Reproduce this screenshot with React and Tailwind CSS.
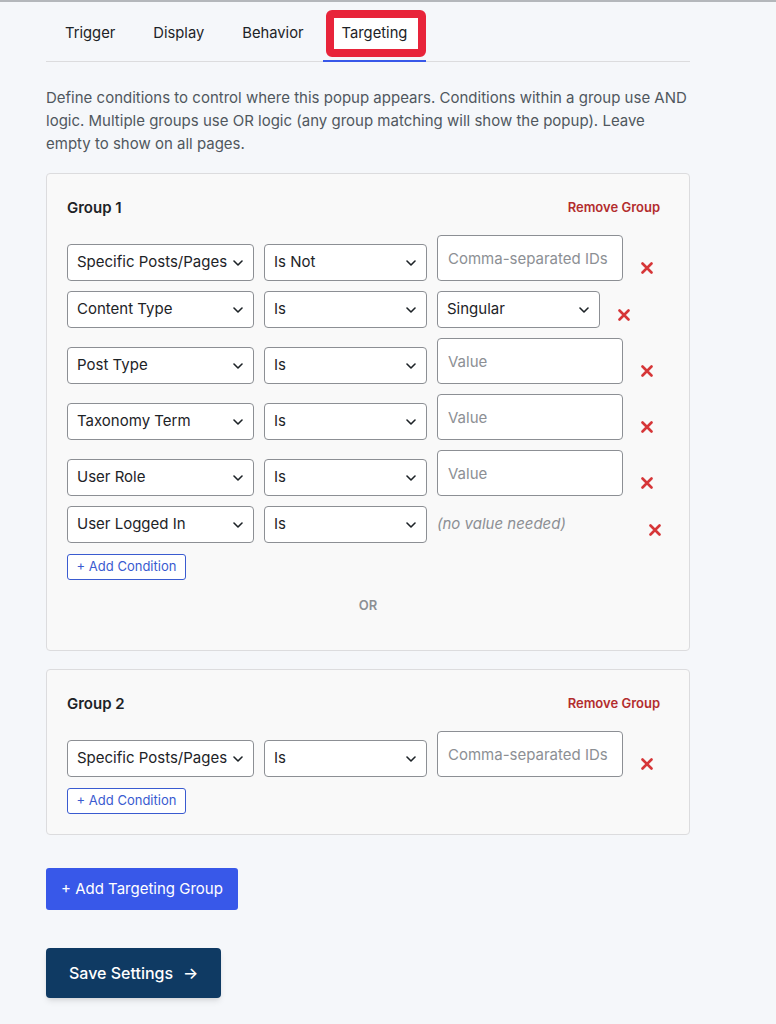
import React from 'react';

const font = "font-['Inter','Noto_Sans',sans-serif]";

const Chevron = () => (
    <svg width="10" height="6" viewBox="0 0 10 6" fill="none" className="shrink-0">
        <path d="M1 1l4 4 4-4" stroke="#1d2327" strokeWidth="1.6" strokeLinecap="round" strokeLinejoin="round" />
    </svg>
);

const RemoveX = () => (
    <button className="w-[24px] h-[26px] ml-[2px] flex items-center justify-center shrink-0">
        <svg width="12" height="12" viewBox="0 0 12 12">
            <path d="M1.5 1.5l9 9M10.5 1.5l-9 9" stroke="#d63638" strokeWidth="2.6" strokeLinecap="round" />
        </svg>
    </button>
);

const Select = ({ label, width }) => (
    <div className={`${width} h-[37px] bg-white border border-[#8c8f94] rounded-[4px] pl-[9px] pr-[10px] flex items-center justify-between text-[15px] text-[#1d2327] shrink-0`}>
        <span className="whitespace-nowrap">{label}</span>
        <Chevron />
    </div>
);

const ValueInput = ({ placeholder }) => (
    <input
        readOnly
        placeholder={placeholder}
        className="w-[186px] h-[46px] bg-white border border-[#8c8f94] rounded-[4px] px-[10px] text-[15px] text-[#1d2327] placeholder:text-[#8c8f94] shrink-0 outline-none"
    />
);

const ConditionRow = ({ field, op, value }) => {
    let third;
    if (value.type === 'input') {
        third = <ValueInput placeholder={value.text} />;
    } else if (value.type === 'select') {
        third = <Select label={value.text} width="w-[163px]" />;
    } else {
        third = (
            <span className="w-[194px] h-[37px] flex items-center text-[15px] italic text-[#8c8f94] shrink-0">
                {value.text}
            </span>
        );
    }
    return (
        <div className="flex items-end gap-[10px] mb-[10px]">
            <Select label={field} width="w-[187px]" />
            <Select label={op} width="w-[163px]" />
            {third}
            <RemoveX />
        </div>
    );
};

const AddCondition = () => (
    <button className="h-[26px] w-[119px] border border-[#3a5bd0] rounded-[3px] bg-white text-[13px] text-[#3a5bd0] mt-px">
        + Add Condition
    </button>
);

const Group = ({ title, rows, showOr }) => (
    <div className="border border-[#dcdcde] bg-[#f9f9f9] rounded-[4px] p-[20px]">
        <div className="flex items-center justify-between pt-[2px] mb-[15px]">
            <h3 className="text-[15px] leading-[24px] font-semibold text-[#1d2327]">{title}</h3>
            <button className="text-[13px] font-semibold text-[#b32d2e] mr-[9px]">Remove Group</button>
        </div>
        {rows.map((r, i) => (
            <ConditionRow key={i} {...r} />
        ))}
        <AddCondition />
        {showOr && (
            <div className="text-center text-[13px] leading-[20px] font-semibold text-[#8c8f94] mt-[15px] mb-[15px]">OR</div>
        )}
    </div>
);

const App = () => {
    const tabs = ['Trigger', 'Display', 'Behavior', 'Targeting'];

    const group1 = [
        { field: 'Specific Posts/Pages', op: 'Is Not', value: { type: 'input', text: 'Comma-separated IDs' } },
        { field: 'Content Type', op: 'Is', value: { type: 'select', text: 'Singular' } },
        { field: 'Post Type', op: 'Is', value: { type: 'input', text: 'Value' } },
        { field: 'Taxonomy Term', op: 'Is', value: { type: 'input', text: 'Value' } },
        { field: 'User Role', op: 'Is', value: { type: 'input', text: 'Value' } },
        { field: 'User Logged In', op: 'Is', value: { type: 'text', text: '(no value needed)' } },
    ];

    const group2 = [
        { field: 'Specific Posts/Pages', op: 'Is', value: { type: 'input', text: 'Comma-separated IDs' } },
    ];

    return (
        <div className={`min-h-screen bg-[#f5f7fa] border-t-2 border-[#b4b7bb] ${font}`}>
            <div className="ml-[46px] w-[644px] pb-[27px]">
                {/* tabs */}
                <div className="flex border-b border-[#dcdcde]">
                    {tabs.map((t) => (
                        <div key={t} className="relative px-[19px] pt-[21px] pb-[18px] text-[14.75px] leading-[20px] text-[#1d2327]">
                            {t}
                            {t === 'Targeting' && (
                                <>
                                    <span className="absolute left-[3px] right-0 top-[8px] h-[47px] border-[8px] border-[#e8243a] rounded-[6px] bg-white" />
                                    <span className="absolute left-0 right-0 -bottom-px h-[2px] bg-[#3858e9]" />
                                    <span className="absolute inset-0 px-[19px] pt-[21px]">{t}</span>
                                </>
                            )}
                        </div>
                    ))}
                </div>

                <p className="mt-[24px] mb-[18px] text-[15px] leading-[23px] text-[#50575e]">
                    Define conditions to control where this popup appears. Conditions within a group use AND logic. Multiple groups use OR logic (any group matching will show the popup). Leave empty to show on all pages.
                </p>

                <div className="flex flex-col gap-[18px]">
                    <Group title="Group 1" rows={group1} showOr />
                    <Group title="Group 2" rows={group2} />
                </div>

                <button className="mt-[33px] h-[42px] px-[15px] bg-[#3858e9] rounded-[3px] text-[15px] text-white block">
                    + Add Targeting Group
                </button>

                <button className="mt-[38px] h-[50px] px-[23px] bg-[#0f3a63] rounded-[4px] shadow-md text-[16px] font-medium text-white flex items-center gap-[10px]">
                    Save Settings
                    <span className="text-[16px]">→</span>
                </button>
            </div>
        </div>
    );
};

export default App;
